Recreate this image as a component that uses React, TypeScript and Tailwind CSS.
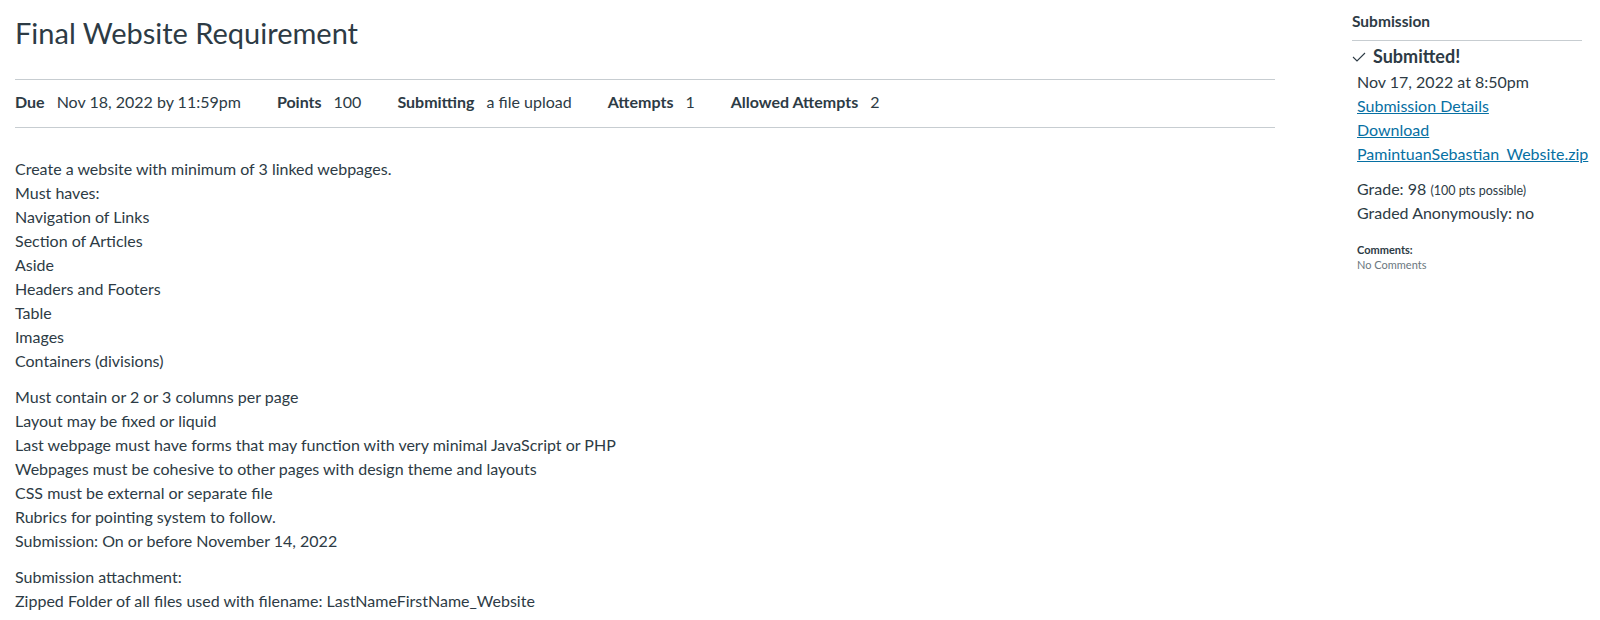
const requirements = [
  "Create a website with minimum of 3 linked webpages.",
  "Must haves:",
  "Navigation of Links",
  "Section of Articles",
  "Aside",
  "Headers and Footers",
  "Table",
  "Images",
  "Containers (divisions)",
];

const rules = [
  "Must contain or 2 or 3 columns per page",
  "Layout may be fixed or liquid",
  "Last webpage must have forms that may function with very minimal JavaScript or PHP",
  "Webpages must be cohesive to other pages with design theme and layouts",
  "CSS must be external or separate file",
  "Rubrics for pointing system to follow.",
  "Submission: On or before November 14, 2022",
];

const details = [
  { label: "Due", value: "Nov 18, 2022 by 11:59pm" },
  { label: "Points", value: "100" },
  { label: "Submitting", value: "a file upload" },
  { label: "Attempts", value: "1" },
  { label: "Allowed Attempts", value: "2" },
];

function SubmissionSidebar() {
  return (
    <aside className="w-[230px] ml-[77px] pt-[10px]">
      <h2 className="text-[15.5px] font-bold leading-[22px] pb-[8px] border-b border-[#c7cdd1]">
        Submission
      </h2>
      <div className="flex items-center mt-[2px] h-[26px]">
        <svg width="14" height="10" viewBox="0 0 14 10" className="mr-[7px] mt-[2px]">
          <polyline
            points="1,5 5,9 13,1"
            fill="none"
            stroke="#2d3b45"
            strokeWidth="1.1"
          />
        </svg>
        <span className="text-[18px] font-bold">Submitted!</span>
      </div>
      <div className="pl-[5px] text-[16px] leading-[24px] mt-[1px]">
        <div>Nov 17, 2022 at 8:50pm</div>
        <a href="#" className="block text-[#0770a3] underline">
          Submission Details
        </a>
        <a href="#" className="block text-[#0770a3] underline">
          Download
        </a>
        <a href="#" className="block text-[#0770a3] underline">
          PamintuanSebastian_Website.zip
        </a>
        <div className="mt-[11px] h-[24px]">
          Grade: 98 <span className="text-[12.5px] leading-[14px]">(100 pts possible)</span>
        </div>
        <div>Graded Anonymously: no</div>
        <div className="mt-[17px] text-[11px] font-bold leading-[15px]">
          Comments:
        </div>
        <div className="text-[11px] leading-[16px] text-[#6b7780]">
          No Comments
        </div>
      </div>
    </aside>
  );
}

export default function App() {
  return (
    <div className="flex h-[620px] bg-white text-[#2d3b45] font-['Lato','Liberation_Sans',sans-serif] overflow-hidden">
      <main className="w-[1275px] pl-[15px] shrink-0">
        <h1 className="text-[29px] leading-[36px] font-normal pt-[15px] pb-[28px]">
          Final Website Requirement
        </h1>
        <div className="flex items-center border-y border-[#c7cdd1] pt-[10px] pb-[13px] text-[16px] leading-[24px]">
          {details.map((d) => (
            <div key={d.label} className="flex items-center mr-[36px]">
              <span className="font-bold mr-[12px]">{d.label}</span>
              <span>{d.value}</span>
            </div>
          ))}
        </div>
        <div className="mt-[29px] text-[16px] leading-[24px]">
          <p>
            {requirements.map((r) => (
              <span key={r} className="block">
                {r}
              </span>
            ))}
          </p>
          <p className="mt-3">
            {rules.map((r) => (
              <span key={r} className="block">
                {r}
              </span>
            ))}
          </p>
          <p className="mt-3">
            <span className="block">Submission attachment:</span>
            <span className="block">
              Zipped Folder of all files used with filename: LastNameFirstName_Website
            </span>
          </p>
        </div>
      </main>
      <SubmissionSidebar />
    </div>
  );
}
